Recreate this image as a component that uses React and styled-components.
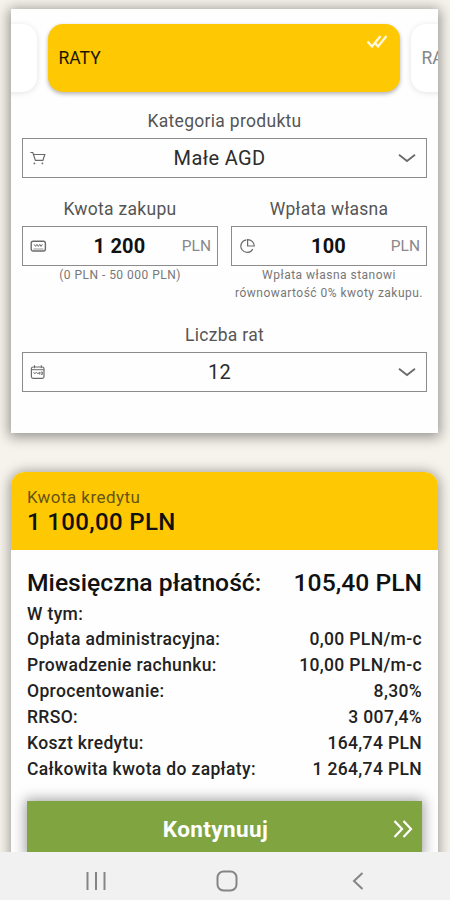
import React from 'react';
import styled, { createGlobalStyle } from 'styled-components';

const GlobalStyle = createGlobalStyle`
  * {
    box-sizing: border-box;
  }
  body {
    margin: 0;
    font-family: Roboto, sans-serif;
    color: #111;
  }
`;

const Screen = styled.div`
  width: 450px;
  height: 900px;
  display: flex;
  flex-direction: column;
  overflow: hidden;
  background-color: #f6f3ec;
`;

const Content = styled.main`
  flex: 1;
  min-height: 0;
  overflow: hidden;
  padding: 9px 12px 0 11px;
`;

const Calculator = styled.section`
  height: 424px;
  background-color: #fefefe;
  box-shadow: 0 2px 12px 2px rgba(0, 0, 0, 0.4);
`;

const Tabs = styled.div`
  height: 100px;
  padding: 15px 2px 0 0;
  display: flex;
  justify-content: center;
  gap: 11px;
  overflow: hidden;
`;

const Tab = styled.div`
  flex: 0 0 352px;
  height: 68px;
  padding: 10px 12px 10px 11px;
  display: flex;
  justify-content: space-between;
  border-radius: 15px;
  font-size: 17.5px;
  line-height: 48px;
  color: ${(props) => (props.$active ? '#1a1600' : '#858585')};
  background-color: ${(props) => (props.$active ? '#fec902' : '#fff')};
  box-shadow: ${(props) => (props.$active
    ? '0 2px 4px rgba(0, 0, 0, 0.3)'
    : '0 1px 6px rgba(0, 0, 0, 0.11)')};
`;

const Form = styled.div`
  padding: 0 11px;
`;

const FieldRow = styled.div`
  display: grid;
  grid-template-columns: 196px 196px;
  justify-content: space-between;
  margin: 19px 0 20px;
  height: 106px;
`;

const Label = styled.div`
  height: 24px;
  margin-bottom: 5px;
  text-align: center;
  font-size: 17.5px;
  line-height: 24px;
  letter-spacing: 0.3px;
  color: #555;
`;

const Box = styled.div`
  height: 40px;
  display: grid;
  grid-template-columns: 30px 1fr ${(props) => (props.$select ? '37px' : '32px')};
  align-items: center;
  padding: 0 ${(props) => (props.$select ? '10px' : '6px')} 0 7px;
  border: 1px solid #8b8b8b;
  color: #6b6b6b;
  svg {
    display: block;
  }
  svg:last-child {
    justify-self: end;
  }
`;

const Value = styled.span`
  text-align: center;
  font-size: 20px;
  line-height: 38px;
  letter-spacing: ${(props) => (props.$strong ? '0.2px' : '0.35px')};
  font-weight: ${(props) => (props.$strong ? 700 : 400)};
  color: ${(props) => (props.$strong ? '#111' : '#2c2c2c')};
`;

const Unit = styled.span`
  justify-self: end;
  font-size: 15.5px;
  color: #898989;
`;

const Hint = styled.div`
  text-align: center;
  white-space: nowrap;
  font-size: 12px;
  line-height: 18px;
  letter-spacing: 0.48px;
  color: #777;
`;

const Summary = styled.section`
  margin-top: 39px;
  height: 440px;
  border-radius: 14px 14px 0 0;
  background-color: #fefefe;
  box-shadow: 0 1px 12px 2px rgba(0, 0, 0, 0.34);
`;

const SummaryHeader = styled.header`
  height: 78px;
  padding: 14px 16px 0;
  border-radius: 14px 14px 0 0;
  background-color: #fec902;
`;

const CreditLabel = styled.div`
  font-size: 17px;
  line-height: 22px;
  letter-spacing: 0.45px;
  color: #655416;
`;

const CreditAmount = styled.div`
  font-size: 24px;
  font-weight: 500;
  line-height: 28px;
  letter-spacing: 0.35px;
`;

const Details = styled.div`
  padding: 16px 16px 0;
`;

const Payment = styled.div`
  display: flex;
  justify-content: space-between;
  height: 35px;
  font-size: 24.7px;
  font-weight: 500;
  line-height: 34px;
`;

const DetailRow = styled.div`
  display: flex;
  justify-content: space-between;
  height: ${(props) => (props.$short ? 25 : 26)}px;
  font-size: 17.5px;
  font-weight: 500;
  line-height: 26px;
  letter-spacing: 0.35px;
  color: #222;
`;

const ContinueButton = styled.button`
  width: 100%;
  height: 56px;
  margin-top: 19px;
  padding: 0 9px;
  display: grid;
  grid-template-columns: 20px 1fr 38px;
  align-items: center;
  border: 0;
  background-color: #7fa440;
  box-shadow: 0 0 12px 2px rgba(0, 0, 0, 0.36);
  color: #fff;
  font-family: inherit;
  font-size: 22.5px;
  font-weight: 700;
  letter-spacing: 0.4px;
  svg {
    justify-self: end;
  }
`;

const NavBar = styled.nav`
  flex: 0 0 48px;
  display: grid;
  grid-template-columns: 131px 131px 131px;
  justify-content: center;
  align-items: center;
  justify-items: center;
  padding: 10px 0 0 3px;
  background-color: #f1f1f1;
  color: #858585;
`;

const DoubleCheck = () => (
  <svg width="22" height="15" viewBox="0 0 22 15" fill="none" stroke="#fff8df" strokeWidth="2.3">
    <path d="M1.5 7.5 6 12.5 14.5 2M9.5 9.5l2.5 3L20.5 2" />
  </svg>
);

const Chevron = () => (
  <svg width="18" height="10" viewBox="0 0 18 10" fill="none" stroke="currentColor" strokeWidth="1.8">
    <path d="M1 1.8 9 8l8-6.2" />
  </svg>
);

const CartIcon = () => (
  <svg width="16" height="16" viewBox="0 0 16 16" fill="none" stroke="currentColor" strokeWidth="1.2">
    <path d="M.3 2.5h2.5l2.6 7.9h7.5l1.9-5.9H3.7" />
    <circle cx="4.4" cy="13.4" r=".9" fill="currentColor" stroke="none" />
    <circle cx="12.4" cy="13.4" r=".9" fill="currentColor" stroke="none" />
  </svg>
);

const CashIcon = () => (
  <svg width="17" height="16" viewBox="0 0 17 16" fill="none" stroke="currentColor">
    <rect x="1.2" y="3.2" width="14.2" height="9.8" rx="2" strokeWidth="1.4" />
    <path d="M3.4 11h10" strokeWidth=".7" />
    <path d="M4.2 6.4l1.4 2 1.4-2 1.4 2 1.4-2 1.2 2 1.4-2" strokeWidth="1" />
  </svg>
);

const PieIcon = () => (
  <svg width="17" height="16" viewBox="0 0 17 16" fill="none" stroke="currentColor" strokeWidth="1.2">
    <path d="M7.4 1.9A6.3 6.3 0 1 0 13.8 11" />
    <path d="M8.6 1.6a6.6 6.6 0 0 1 6.7 6.4H8.6z" />
  </svg>
);

const CalendarIcon = () => (
  <svg width="16" height="16" viewBox="0 0 16 16" fill="none" stroke="currentColor">
    <rect x="1.4" y="3" width="12.6" height="11.4" rx="1.8" strokeWidth="1.2" />
    <path d="M4.5 1.2v3M11.3 1.2v3M1.7 5.7h12.4" strokeWidth="1" />
    <path d="M3.5 8l1.2 2 1.6-2 1.6 2 1.6-2v2.6M11 8h1.5v2.4H11z" strokeWidth=".8" />
  </svg>
);

const DoubleArrow = () => (
  <svg width="20" height="20" viewBox="0 0 20 20" fill="none" stroke="#fff" strokeWidth="2.2">
    <path d="M1.5 2 9 10l-7.5 8M10.5 2 18 10l-7.5 8" />
  </svg>
);

const details = [
  ['Opłata administracyjna:', '0,00 PLN/m-c'],
  ['Prowadzenie rachunku:', '10,00 PLN/m-c'],
  ['Oprocentowanie:', '8,30%'],
  ['RRSO:', '3 007,4%'],
  ['Koszt kredytu:', '164,74 PLN'],
  ['Całkowita kwota do zapłaty:', '1 264,74 PLN'],
];

const Select = ({ label, value, icon }) => (
  <div>
    <Label>{label}</Label>
    <Box $select>
      {icon}
      <Value>{value}</Value>
      <Chevron />
    </Box>
  </div>
);

const AmountField = ({
  label, value, icon, children
}) => (
  <div>
    <Label>{label}</Label>
    <Box>
      {icon}
      <Value $strong>{value}</Value>
      <Unit>PLN</Unit>
    </Box>
    <Hint>{children}</Hint>
  </div>
);

const App = () => (
  <>
    <GlobalStyle />
    <Screen>
      <Content>
        <Calculator>
          <Tabs>
            <Tab />
            <Tab $active>
              RATY
              <DoubleCheck />
            </Tab>
            <Tab>RATY</Tab>
          </Tabs>
          <Form>
            <Select label="Kategoria produktu" value="Małe AGD" icon={<CartIcon />} />
            <FieldRow>
              <AmountField label="Kwota zakupu" value="1 200" icon={<CashIcon />}>
                (0 PLN - 50 000 PLN)
              </AmountField>
              <AmountField label="Wpłata własna" value="100" icon={<PieIcon />}>
                Wpłata własna stanowi
                <br />
                równowartość 0% kwoty zakupu.
              </AmountField>
            </FieldRow>
            <Select label="Liczba rat" value="12" icon={<CalendarIcon />} />
          </Form>
        </Calculator>
        <Summary>
          <SummaryHeader>
            <CreditLabel>Kwota kredytu</CreditLabel>
            <CreditAmount>1 100,00 PLN</CreditAmount>
          </SummaryHeader>
          <Details>
            <Payment>
              <span>Miesięczna płatność:</span>
              <span>105,40 PLN</span>
            </Payment>
            <DetailRow $short>W tym:</DetailRow>
            {details.map(([name, amount]) => (
              <DetailRow key={name}>
                <span>{name}</span>
                <span>{amount}</span>
              </DetailRow>
            ))}
            <ContinueButton type="button">
              <span />
              Kontynuuj
              <DoubleArrow />
            </ContinueButton>
          </Details>
        </Summary>
      </Content>
      <NavBar>
        <svg width="20" height="18" viewBox="0 0 20 18" stroke="currentColor" strokeWidth="2">
          <path d="M1.5 0v18M10 0v18M18.5 0v18" />
        </svg>
        <svg width="22" height="22" viewBox="0 0 22 22" fill="none" stroke="currentColor" strokeWidth="2">
          <rect x="1.5" y="1.5" width="19" height="19" rx="6" />
        </svg>
        <svg width="12" height="18" viewBox="0 0 12 18" fill="none" stroke="currentColor" strokeWidth="2">
          <path d="M10.5 1 2 9l8.5 8" />
        </svg>
      </NavBar>
    </Screen>
  </>
);

export default App;
